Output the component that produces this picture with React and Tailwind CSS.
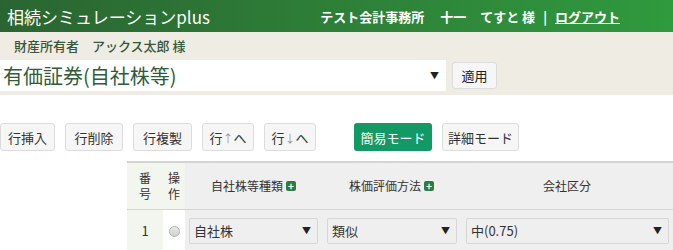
import React from 'react';

const font = "font-['Noto_Sans_CJK_JP',sans-serif]";

function ToolButton({ children, w }) {
  return (
    <button className={`h-[28px] ${w} shrink-0 rounded-[3px] border border-[#dcdcdc] bg-[#f6f6f6] text-[13px] leading-none text-[#333]`}>
      {children}
    </button>
  );
}

function PlusIcon() {
  return (
    <span className="ml-[3px] inline-flex h-[10px] w-[10px] items-center justify-center rounded-[2px] bg-[#2f7d3a] text-[10px] font-bold leading-none text-white">
      +
    </span>
  );
}

function CellSelect({ value }) {
  return (
    <div className="flex h-[26px] w-full items-center justify-between rounded-[2px] border border-[#d6d6d6] bg-[#efefef] pl-[4px] pr-[6px] text-[13px] text-[#333]">
      <span>{value}</span>
      <span className="text-[9px] text-[#222]">▼</span>
    </div>
  );
}

export default function App() {
  return (
    <div className={`h-[250px] w-[673px] overflow-hidden bg-white ${font}`}>
      {/* header */}
      <div className="flex h-[32px] items-center justify-between bg-gradient-to-r from-[#2a6531] to-[#2f9a3e] pl-[7px] pr-[53px] text-white">
        <div className="text-[17px] leading-none">相続シミュレーションplus</div>
        <div className="flex items-center text-[13px] font-bold leading-none">
          <span>テスト会計事務所</span>
          <span className="ml-[16px]">十一</span>
          <span className="ml-[14px]">てすと 様</span>
          <span className="mx-[8px]">|</span>
          <span className="underline">ログアウト</span>
        </div>
      </div>

      {/* owner / category */}
      <div className="h-[63px] bg-[#efece3]">
        <div className="flex h-[28px] items-center pl-[14px] text-[13px] font-medium text-[#35573a]">
          財産所有者　アックス太郎 様
        </div>
        <div className="flex items-center">
          <div className="flex h-[31px] w-[446px] items-center justify-between bg-white pl-[3px] pr-[7px]">
            <span className="text-[20px] leading-none text-[#2f5d3c]">有価証券(自社株等)</span>
            <span className="text-[9px] text-[#222]">▼</span>
          </div>
          <button className="ml-[6px] h-[27px] w-[45px] rounded-[3px] border border-[#dcdcdc] bg-[#f6f6f6] text-[13px] leading-none text-[#222]">
            適用
          </button>
        </div>
      </div>

      {/* toolbar */}
      <div className="mt-[28px] flex h-[28px] items-center">
        <div className="flex gap-[10px]">
          <ToolButton w="w-[55px]">行挿入</ToolButton>
          <ToolButton w="w-[58px]">行削除</ToolButton>
          <ToolButton w="w-[59px]">行複製</ToolButton>
          <ToolButton w="w-[52px]">行<span className="text-[11px] text-[#999]">↑</span>へ</ToolButton>
          <ToolButton w="w-[52px]">行<span className="text-[11px] text-[#999]">↓</span>へ</ToolButton>
        </div>
        <div className="ml-[38px] flex gap-[10px]">
          <button className="h-[28px] w-[78px] rounded-[3px] bg-[#129966] text-[13px] leading-none text-white">簡易モード</button>
          <ToolButton w="w-[77px]">詳細モード</ToolButton>
        </div>
      </div>

      {/* table */}
      <div className="ml-[127px] mt-[10px] grid grid-cols-[36px_22px_137px_139px_1fr] border-t-2 border-[#d4d4d4] text-[12px] text-[#333]">
        <div className="flex h-[46px] flex-col items-center justify-center bg-[#f2f6ee] leading-[16px]">
          <span>番</span><span>号</span>
        </div>
        <div className="flex h-[46px] flex-col items-center justify-center bg-[#f2f6ee] leading-[16px]">
          <span>操</span><span>作</span>
        </div>
        <div className="flex h-[46px] items-center justify-center bg-[#efefef]">自社株等種類<PlusIcon /></div>
        <div className="flex h-[46px] items-center justify-center bg-[#efefef]">株価評価方法<PlusIcon /></div>
        <div className="flex h-[46px] items-center justify-center bg-[#efefef]">会社区分</div>

        <div className="col-span-5 h-[1px] bg-[#d4d4d4]" />

        <div className="flex h-[42px] items-center justify-center bg-[#f2f6ee] text-[13px]">1</div>
        <div className="flex h-[42px] items-center justify-center bg-white">
          <span className="h-[11px] w-[11px] rounded-full border border-[#b5b5b5] bg-gradient-to-b from-[#e8e8e8] to-[#d0d0d0]" />
        </div>
        <div className="flex h-[42px] items-center bg-[#efefef] pl-[4px] pr-[4px]"><CellSelect value="自社株" /></div>
        <div className="flex h-[42px] items-center bg-[#efefef] pl-[5px] pr-[4px]"><CellSelect value="類似" /></div>
        <div className="flex h-[42px] items-center bg-[#efefef] pl-[5px] pr-[4px]"><CellSelect value="中(0.75)" /></div>
      </div>
    </div>
  );
}
